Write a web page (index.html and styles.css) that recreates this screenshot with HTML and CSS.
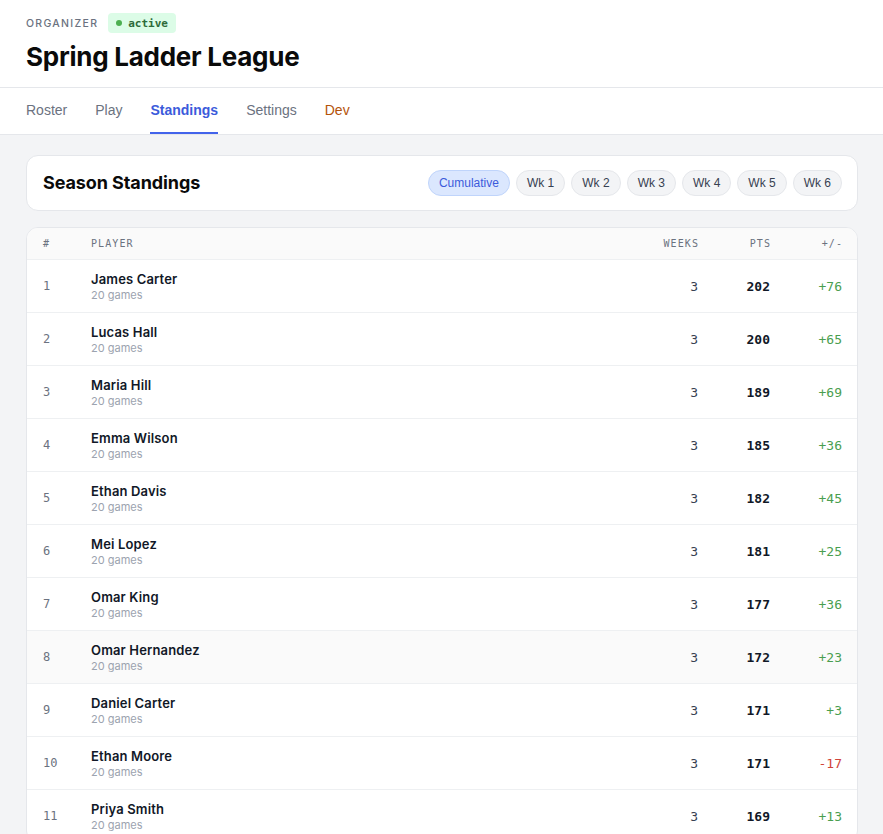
FILE: index.html
```html
<!DOCTYPE html>
<html>
<head>
<meta charset="utf-8">
<link rel="stylesheet" href="styles.css">
</head>
<body>
<header class="top">
  <div class="eyebrow">
    <span class="role">ORGANIZER</span>
    <span class="badge"><span class="dot"></span>active</span>
  </div>
  <h1 class="title">Spring Ladder League</h1>
</header>
<nav class="tabs">
  <button class="tab">Roster</button>
  <button class="tab">Play</button>
  <button class="tab active">Standings</button>
  <button class="tab">Settings</button>
  <button class="tab dev">Dev</button>
</nav>
<main class="main">
  <section class="card head-card">
    <h2 class="card-title">Season Standings</h2>
    <div class="pills">
      <button class="pill on">Cumulative</button>
      <button class="pill">Wk 1</button>
      <button class="pill">Wk 2</button>
      <button class="pill">Wk 3</button>
      <button class="pill">Wk 4</button>
      <button class="pill">Wk 5</button>
      <button class="pill">Wk 6</button>
    </div>
  </section>
  <section class="card table">
    <div class="row thead">
      <span>#</span><span>Player</span><span class="r">Weeks</span><span class="r">Pts</span><span class="r">+/-</span>
    </div>
    <div class="row"><span class="rank">1</span><div class="player"><div class="name">James Carter</div><div class="sub">20 games</div></div><span class="wk">3</span><span class="pts">202</span><span class="diff pos">+76</span></div>
    <div class="row"><span class="rank">2</span><div class="player"><div class="name">Lucas Hall</div><div class="sub">20 games</div></div><span class="wk">3</span><span class="pts">200</span><span class="diff pos">+65</span></div>
    <div class="row"><span class="rank">3</span><div class="player"><div class="name">Maria Hill</div><div class="sub">20 games</div></div><span class="wk">3</span><span class="pts">189</span><span class="diff pos">+69</span></div>
    <div class="row"><span class="rank">4</span><div class="player"><div class="name">Emma Wilson</div><div class="sub">20 games</div></div><span class="wk">3</span><span class="pts">185</span><span class="diff pos">+36</span></div>
    <div class="row"><span class="rank">5</span><div class="player"><div class="name">Ethan Davis</div><div class="sub">20 games</div></div><span class="wk">3</span><span class="pts">182</span><span class="diff pos">+45</span></div>
    <div class="row"><span class="rank">6</span><div class="player"><div class="name">Mei Lopez</div><div class="sub">20 games</div></div><span class="wk">3</span><span class="pts">181</span><span class="diff pos">+25</span></div>
    <div class="row"><span class="rank">7</span><div class="player"><div class="name">Omar King</div><div class="sub">20 games</div></div><span class="wk">3</span><span class="pts">177</span><span class="diff pos">+36</span></div>
    <div class="row hover"><span class="rank">8</span><div class="player"><div class="name">Omar Hernandez</div><div class="sub">20 games</div></div><span class="wk">3</span><span class="pts">172</span><span class="diff pos">+23</span></div>
    <div class="row"><span class="rank">9</span><div class="player"><div class="name">Daniel Carter</div><div class="sub">20 games</div></div><span class="wk">3</span><span class="pts">171</span><span class="diff pos">+3</span></div>
    <div class="row"><span class="rank">10</span><div class="player"><div class="name">Ethan Moore</div><div class="sub">20 games</div></div><span class="wk">3</span><span class="pts">171</span><span class="diff neg">-17</span></div>
    <div class="row"><span class="rank">11</span><div class="player"><div class="name">Priya Smith</div><div class="sub">20 games</div></div><span class="wk">3</span><span class="pts">169</span><span class="diff pos">+13</span></div>
  </section>
</main>
</body>
</html>
```

FILE: styles.css
```css
* { box-sizing: border-box; }
html, body { margin: 0; padding: 0; }
body {
  background: #f3f4f6;
  font-family: Inter, "Liberation Sans", sans-serif;
  color: #111827;
  overflow: hidden;
  height: 834px;
}
.top {
  background: #fff;
  padding: 13px 26px 0;
  height: 88px;
  border-bottom: 1px solid #e5e7eb;
}
.eyebrow { display: flex; align-items: center; gap: 10px; height: 20px; }
.role {
  font-size: 10.5px;
  letter-spacing: 1.3px;
  color: #6b7280;
  font-weight: 500;
}
.badge {
  display: inline-flex;
  align-items: center;
  gap: 6px;
  height: 20px;
  padding: 0 8px;
  background: #dcfce7;
  border-radius: 4px;
  color: #2f6b3a;
  font-family: "DejaVu Sans Mono", monospace;
  font-size: 11px;
  font-weight: 600;
}
.dot { width: 6px; height: 6px; border-radius: 50%; background: #4caf50; }
.title {
  margin: 9px 0 0;
  font-size: 26px;
  font-weight: 700;
  letter-spacing: -0.25px;
  line-height: 30px;
  color: #0a0a0a;
}
.tabs {
  background: #fff;
  display: flex;
  gap: 28px;
  padding: 0 26px;
  height: 47px;
  border-bottom: 1px solid #e5e7eb;
}
.tab {
  border: 0;
  background: none;
  padding: 0;
  font-family: "Liberation Sans", Arial, sans-serif;
  font-size: 14px;
  color: #6b7280;
  height: 46px;
  border-bottom: 2px solid transparent;
  cursor: pointer;
}
.tab.active { color: #3b5bdb; font-weight: 700; border-bottom-color: #4263eb; }
.tab.dev { color: #b45309; }
.main { padding: 20px 25px 0 26px; display: flex; flex-direction: column; gap: 16px; }
.card {
  background: #fff;
  border: 1px solid #e5e7eb;
  border-radius: 12px;
}
.head-card {
  display: flex;
  align-items: center;
  justify-content: space-between;
  height: 56px;
  padding: 0 15px 2px 16px;
}
.card-title { margin: 0; font-size: 18px; font-weight: 700; letter-spacing: -0.1px; color: #0a0a0a; }
.pills { display: flex; gap: 6px; margin-top: 2px; }
.pill {
  height: 26px;
  padding: 0 10px;
  border-radius: 13px;
  border: 1px solid #e5e7eb;
  background: #f3f4f6;
  font-family: "Liberation Sans", Arial, sans-serif;
  font-size: 12px;
  color: #374151;
}
.pill.on { background: #dbe7fe; border-color: #bfd4fb; color: #3b5bdb; }
.table { overflow: hidden; }
.row {
  display: grid;
  grid-template-columns: 48px 1fr 80px 72px 72px;
  align-items: center;
  padding: 0 15px 0 16px;
  height: 53px;
  border-top: 1px solid #eef0f2;
}
.row.hover { background: #fafafa; }
.thead {
  height: 31px;
  border-top: 0;
  background: #fafafa;
  font-family: "DejaVu Sans Mono", monospace;
  font-size: 10px;
  font-weight: 500;
  letter-spacing: 1.1px;
  text-transform: uppercase;
  color: #6b7280;
}
.r { text-align: right; }
.thead .r { margin-right: -1.1px; }
.rank { font-family: "DejaVu Sans Mono", monospace; font-size: 12px; color: #6b7280; }
.player { line-height: 1; padding-top: 2px; }
.name { font-size: 13px; font-weight: 600; color: #111827; letter-spacing: 0.15px; }
.sub { font-size: 11px; color: #9ca3af; margin-top: 4px; }
.wk, .pts, .diff { text-align: right; font-family: "DejaVu Sans Mono", monospace; font-size: 13px; }
.wk { color: #374151; }
.pts { font-weight: 600; color: #111827; }
.pos { color: #4a9e4f; }
.neg { color: #d0453a; }
```
